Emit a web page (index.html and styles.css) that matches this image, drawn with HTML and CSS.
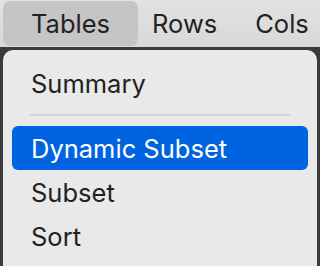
FILE: index.html
```html
<!DOCTYPE html>
<html lang="en">
<head>
    <meta charset="UTF-8">
    <meta name="viewport" content="width=device-width, initial-scale=1.0">
    <title>Tables menu</title>
    <link rel="stylesheet" href="styles.css">
</head>
<body>
    <div class="menubar">
        <div class="menu-title open">Tables</div>
        <div class="menu-title">Rows</div>
        <div class="menu-title">Cols</div>
    </div>

    <div class="dropdown">
        <div class="item">Summary</div>
        <div class="separator"></div>
        <div class="item selected">Dynamic Subset</div>
        <div class="item">Subset</div>
        <div class="item">Sort</div>
    </div>
</body>
</html>
```

FILE: styles.css
```css
body {
    margin: 0;
    width: 320px;
    height: 266px;
    overflow: hidden;
    background-color: #3b3b3b;
    font-family: Inter, "Noto Sans", sans-serif;
    font-size: 25.5px;
    color: #222;
}

.menubar {
    display: flex;
    height: 47px;
    padding: 1px 3px 0;
    box-sizing: border-box;
    background: linear-gradient(#e2e2e2, #d8d8d8);
}

.menu-title {
    height: 45px;
    line-height: 45px;
    padding: 0 19px;
    border-radius: 7px;
}

.menu-title.open {
    padding: 0 28px;
    margin-right: -5px;
    background-color: #c5c5c5;
}

.dropdown {
    margin: 3px 3px 0;
    padding-top: 11px;
    height: 216px;
    box-sizing: border-box;
    overflow: hidden;
    border-radius: 10px 10px 0 0;
    background-color: #e9e9e9;
}

.item {
    height: 44px;
    line-height: 46px;
    margin: 0 9px;
    padding-left: 19px;
    border-radius: 6px;
}

.item.selected {
    background-color: #0064e0;
    color: #fff;
}

.separator {
    height: 2px;
    margin: 9px 27px 10px;
    background-color: #d3d3d3;
}
```
